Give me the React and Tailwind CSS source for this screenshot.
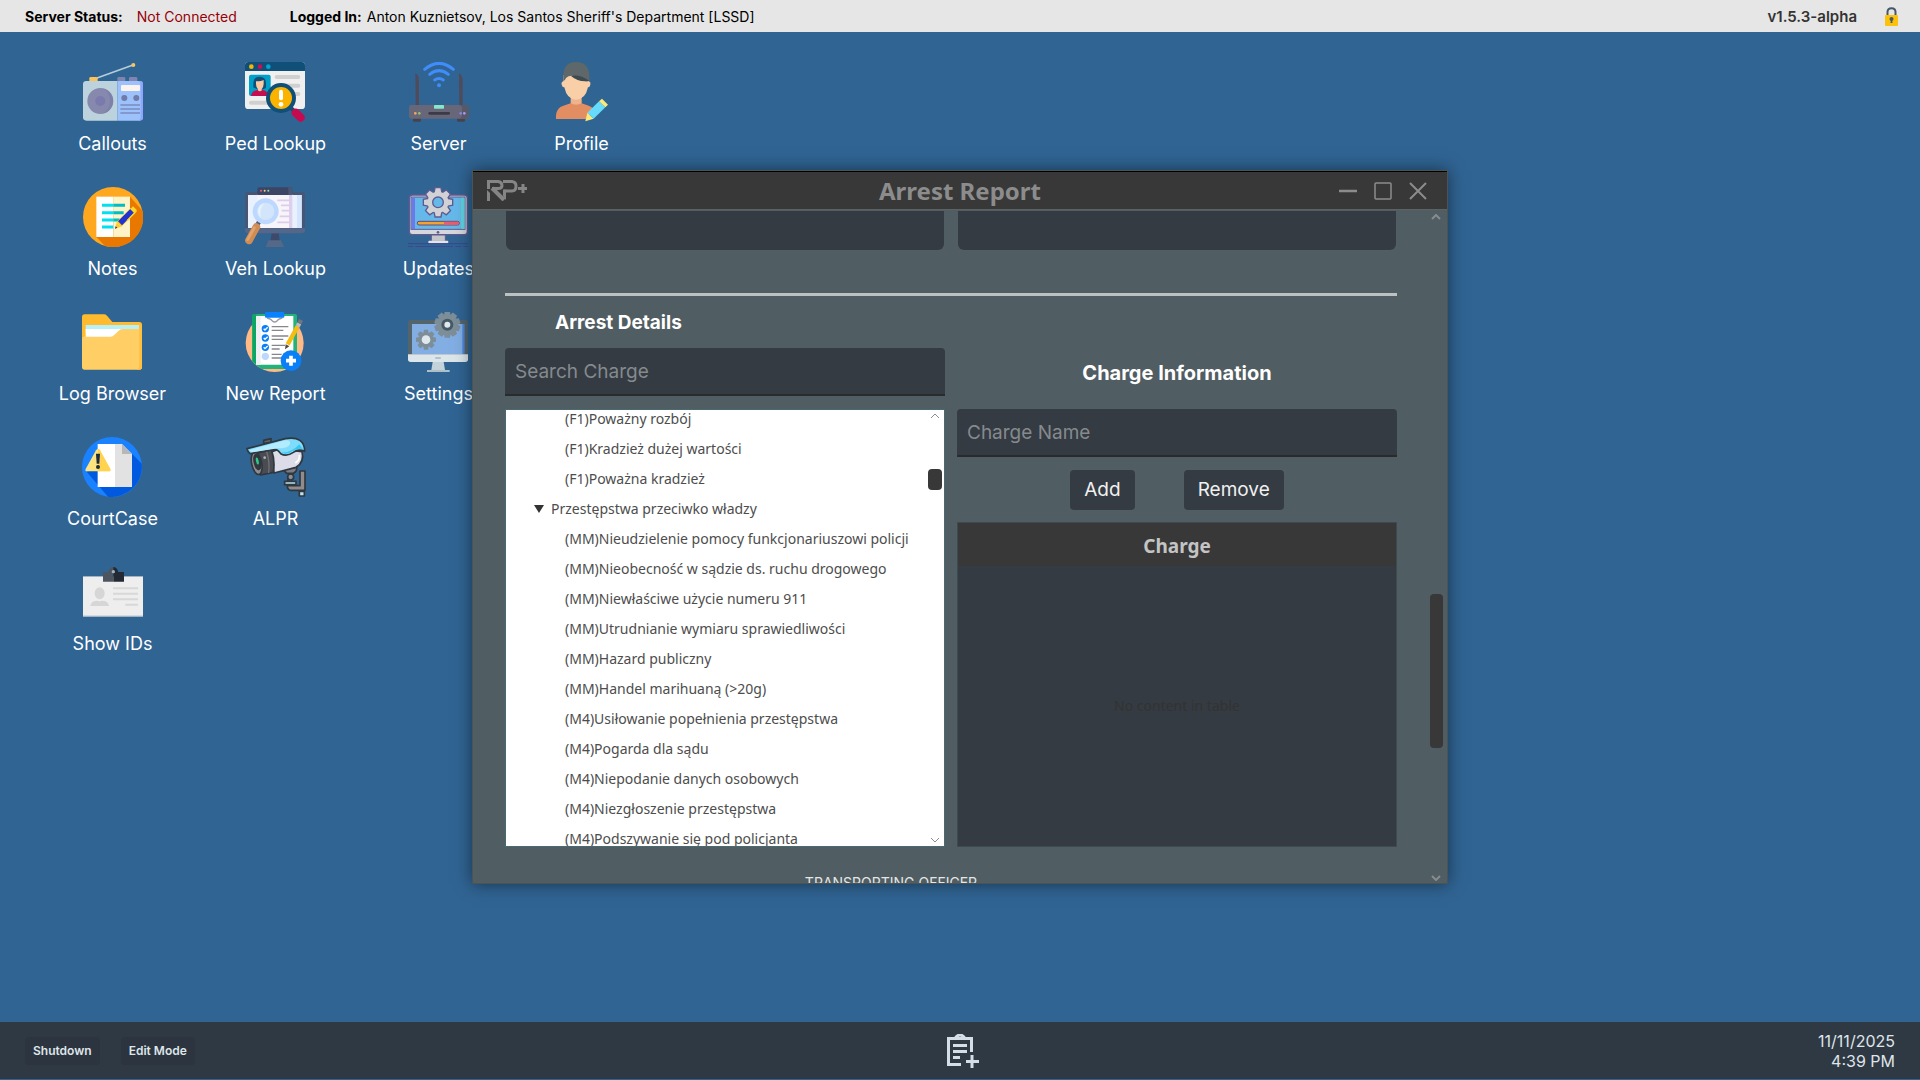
import React, { useState } from "react";

const Gear = ({ cx, cy, r, hole, teeth = 8, fill, stroke = "none", center }) => {
  const angles = Array.from({ length: teeth }, (_, i) => (i * 360) / teeth);
  return (
    <g>
      {angles.map((a) => (
        <path
          key={a}
          d={`M${cx - r * 0.28} ${cy - r * 0.6} L${cx - r * 0.2} ${cy - r} H${cx + r * 0.2} L${cx + r * 0.28} ${cy - r * 0.6}`}
          transform={`rotate(${a} ${cx} ${cy})`}
          fill={fill}
          stroke={stroke}
          strokeWidth="4"
        />
      ))}
      <circle cx={cx} cy={cy} r={r * 0.72} fill={fill} />
      <circle cx={cx} cy={cy} r={hole} fill={center} stroke={stroke} strokeWidth="4" />
    </g>
  );
};

const RadioIcon = () => (
  <svg viewBox="0 0 180 180" className="h-15 w-15">
    <path d="M42 48 L150 9" stroke="#b4cdd9" strokeWidth="5" />
    <circle cx="151" cy="9" r="6" fill="#fdc45e" />
    <path d="M19 58 V49 q0 -4 4 -4 h17 q4 0 4 4 v9z" fill="#fcc35a" />
    <path d="M103 58 v-9 q0 -4 4 -4 h16 q4 0 4 4 v9z M138 58 v-9 q0 -4 4 -4 h17 q4 0 4 4 v9z" fill="#8084af" />
    <path d="M103 57 H10 Q0 57 0 67 V166 Q0 176 10 176 H103z" fill="#bcd2dc" />
    <path d="M103 57 H170 Q180 57 180 67 V166 Q180 176 170 176 H103z" fill="#9dc2fb" />
    <path d="M166 57 H170 Q180 57 180 67 V166 Q180 176 170 176 H164 Q173 174 173 164 V68 Q173 59 166 57z" fill="#8ea5fb" />
    <circle cx="52" cy="117" r="39" fill="#8689ad" />
    <path d="M60 79 A39 39 0 0 1 60 155 A45 45 0 0 0 60 79z" fill="#7d80a8" />
    <circle cx="52" cy="117" r="15" fill="#7b7aad" />
    <rect x="114" y="69" width="57" height="18" rx="3" fill="#faf3f0" />
    <circle cx="124" cy="108" r="9" fill="#6f7ba8" />
    <circle cx="160" cy="108" r="9" fill="#6f7ba8" />
    <path d="M112 129 H171 M112 141 H171 M112 153 H171" stroke="#7a8cbf" strokeWidth="5" />
  </svg>
);

const PedIcon = () => (
  <svg viewBox="0 0 180 180" className="h-15 w-15">
    <rect width="180" height="141" rx="10" fill="#f0f0f0" />
    <path d="M0 27 V10 Q0 0 10 0 H170 Q180 0 180 10 V27z" fill="#0f4f78" />
    <circle cx="19" cy="14" r="7" fill="#f8b500" />
    <circle cx="45" cy="14" r="7" fill="#c90f55" />
    <circle cx="70" cy="14" r="7" fill="#00a4cf" />
    <rect x="12" y="38" width="65" height="64" rx="6" fill="#00a0c8" />
    <path d="M25 76 V62 Q26 44 44 44 Q62 44 63 62 V78 Q44 88 25 76z" fill="#0f4f78" />
    <path d="M33 58 Q50 58 56 54 V66 Q55 78 50 82 V90 H39 V82 Q33 76 33 66z" fill="#fbc9a2" />
    <path d="M18 102 Q20 86 38 84 Q44 92 52 84 Q68 86 71 102z" fill="#c50d50" />
    <path d="M95 45 H160 M95 71 H160 M95 96 H160 M18 122 H70" stroke="#d0d0d0" strokeWidth="12" strokeLinecap="round" />
    <path d="M138 138 L152 152" stroke="#0f4f78" strokeWidth="12" />
    <path d="M152 152 L167 167" stroke="#c50a50" strokeWidth="24" strokeLinecap="round" />
    <circle cx="108" cy="108" r="45" fill="#0f4f78" />
    <circle cx="108" cy="108" r="33" fill="#fab400" />
    <rect x="102" y="83" width="12" height="32" rx="6" fill="#fff" />
    <circle cx="108" cy="127" r="7" fill="#fff" />
  </svg>
);

const NotesIcon = () => (
  <svg viewBox="0 0 180 180" className="h-15 w-15">
    <circle cx="90" cy="90" r="90" fill="#ffa71f" />
    <path d="M141 29 L179 72 A90 90 0 0 1 66 177 L40 150z" fill="#e87800" />
    <path d="M40 29 H91 V150 H40z" fill="#fff" />
    <path d="M91 29 H141 V150 H91z" fill="#fff3c8" />
    <path d="M57 55 H91 M57 77 H91 M57 99 H91 M57 120 H91" stroke="#00e0ee" strokeWidth="9" />
    <path d="M91 55 H126 M91 77 H122 M91 99 H110" stroke="#00bcc4" strokeWidth="9" />
    <path d="M96 125 L101 107 L113 119z" fill="#ffc928" />
    <path d="M96 125 L98 118 L103 122z" fill="#1f2a9c" />
    <path d="M107 113 L150 70" stroke="#ffcf1f" strokeWidth="20" />
    <path d="M111 109 L148 72" stroke="#2332d2" strokeWidth="17" />
    <path d="M142 66 L150 58 L162 70 L154 78z" fill="#ffd829" />
    <path d="M160 72 L132 101" stroke="#ffd829" strokeWidth="4" />
  </svg>
);

const VehIcon = () => (
  <svg viewBox="0 0 180 180" className="h-15 w-15">
    <path d="M80 138 H101 L104 162 H76z" fill="#3e4a6b" />
    <path d="M70 160 H108 L117 180 H62z" fill="#556887" />
    <rect y="15" width="180" height="124" rx="10" fill="#475675" />
    <path d="M0 124 H180 V130 Q180 139 170 139 H10 Q0 139 0 130z" fill="#54678a" />
    <rect x="9" y="24" width="161" height="99" fill="#e9f1ff" />
    <path d="M156 24 H170 V123 H156z" fill="#d3e4ff" />
    <path d="M37 22 H142 V123 H37z" fill="#f7f4fa" />
    <path d="M132 22 H142 V123 H132z" fill="#ddd0ee" />
    <path d="M37 24 V6 Q37 1 43 1 H136 Q142 1 142 6 V24z" fill="#3c4664" />
    <path d="M130 1 H136 Q142 1 142 6 V24 H130z" fill="#4b5777" />
    <circle cx="48" cy="11" r="3" fill="#e0637a" />
    <circle cx="59" cy="11" r="3" fill="#f1d08a" />
    <circle cx="70" cy="11" r="3" fill="#9fd9a3" />
    <path d="M97 40 H134 M108 55 H134 M110 71 H134 M104 88 H134 M97 106 H134" stroke="#dccdea" strokeWidth="5" />
    <path d="M34 118 L43 103" stroke="#4a5d78" strokeWidth="13" />
    <path d="M34 120 L12 160" stroke="#cf8d55" strokeWidth="23" strokeLinecap="round" />
    <path d="M28 122 L8 158" stroke="#e0a56e" strokeWidth="8" strokeLinecap="round" />
    <circle cx="62" cy="73" r="39" fill="#bcd8ff" />
    <circle cx="62" cy="73" r="26" fill="#d2e5fb" />
    <path d="M48 92 A26 26 0 0 1 58 48 A50 50 0 0 0 48 92z" fill="#e6f1fe" />
  </svg>
);

const RouterIcon = () => (
  <svg viewBox="0 0 180 180" className="h-15 w-15">
    <g fill="none" stroke="#3f8cfa" strokeWidth="9" strokeLinecap="round">
      <path d="M47 22 Q90 -14 133 22" />
      <path d="M62 37 Q90 15 118 37" />
      <path d="M77 54 Q90 45 103 54" />
    </g>
    <circle cx="90" cy="70" r="6" fill="#3f8cfa" />
    <path d="M19 34 Q30 38 30 58 V130 H20z M150 34 Q161 38 161 58 V130 H151z" fill="#4e4c5c" />
    <path d="M12 168 H36 V176 Q36 179 32 179 H16 Q12 179 12 176z M144 168 H168 V176 Q168 179 164 179 H148 Q144 179 144 176z" fill="#45434f" />
    <rect y="129" width="180" height="41" rx="7" fill="#676779" />
    <path d="M152 129 H173 Q180 129 180 136 V163 Q180 170 173 170 H152 Q159 168 159 160 V138 Q159 131 152 129z" fill="#595868" />
    <rect x="75" y="129" width="30" height="11" rx="2" fill="#86e8c8" />
    <rect x="58" y="150" width="65" height="8" rx="4" fill="#3c3a48" />
    <circle cx="19" cy="154" r="4" fill="#f0a860" />
    <circle cx="31" cy="154" r="4" fill="#8dc36c" />
    <circle cx="155" cy="154" r="4" fill="#8a80e0" />
    <circle cx="166" cy="154" r="4" fill="#a49af0" />
  </svg>
);

const ProfileIcon = () => (
  <svg viewBox="0 0 156 180" className="h-15 w-13">
    <path d="M44 104 H77 V130 H44z" fill="#efb38b" />
    <path d="M0 171 V160 Q2 137 22 131 L44 124 Q60 132 77 124 L98 131 Q108 134 114 142 L90 171z" fill="#e38d63" />
    <path d="M22 40 H99 V58 Q105 60 103 68 Q101 76 96 76 Q88 113 60 113 Q33 113 25 76 Q19 76 17 68 Q15 60 22 58z" fill="#f9cfa8" />
    <path d="M22 57 V38 Q24 0 60 0 Q97 0 100 38 V57 Q70 60 52 42 Q38 40 30 48 Q27 56 22 57z" fill="#5e6769" />
    <path d="M45 42 Q70 36 100 57 Q68 62 45 42z" fill="#3d4a50" />
    <path d="M88 178 L94 152 L113 170z" fill="#fbe97a" />
    <path d="M94 152 L129 118 L148 136 L113 170z" fill="#66dbfb" />
    <path d="M129 118 L138 110 L156 128 L148 136z" fill="#fbe97a" />
  </svg>
);

const UpdatesIcon = () => (
  <svg viewBox="0 0 180 180" className="h-15 w-15">
    <rect x="4" y="24" width="174" height="119" rx="9" fill="#d6d7dc" stroke="#5f5a90" strokeWidth="4" />
    <rect x="9" y="30" width="162" height="97" fill="#65b9ea" stroke="#5f5a90" strokeWidth="3" />
    <path d="M11 32 H21 V126 H11z" fill="#6c7ae8" />
    <path d="M160 32 H170 V126 H160z" fill="#5cd6e0" />
    <Gear cx={90} cy={46} r={44} hole={16} fill="#d0d2d6" stroke="#5f5a90" center="#65b9ea" />
    <rect x="28" y="103" width="126" height="11" rx="5" fill="#f7a12e" stroke="#5b4a80" strokeWidth="3" />
    <path d="M108 104 H149 Q153 104 153 108 Q153 113 149 113 H108z" fill="#ee5a6e" />
    <circle cx="90" cy="136" r="4" fill="#5f5a90" />
    <path d="M70 144 H112 V163 H70z" fill="#c4c6cb" stroke="#5f5a90" strokeWidth="3" />
    <rect x="61" y="161" width="60" height="8" rx="3" fill="#e4e5e8" />
    <path d="M0 170 H180 M0 179 H16 M22 179 H135 M142 179 H160 M166 179 H180" stroke="#3f4490" strokeWidth="3" />
  </svg>
);

const SettingsIcon = () => (
  <svg viewBox="0 0 180 180" className="h-15 w-15">
    <path d="M0 128 V32 Q0 24 8 24 H172 Q180 24 180 32 V128z" fill="#54646c" />
    <path d="M12 36 H168 V127 H12z" fill="#82aee3" />
    <path d="M163 36 H170 V127 H163z" fill="#4b86d8" />
    <path d="M0 127 H180 V142 Q180 150 172 150 H8 Q0 150 0 142z" fill="#dbe5ea" />
    <rect x="81" y="135" width="18" height="6" rx="3" fill="#b3c1c9" />
    <path d="M74 150 H107 L111 174 H70z" fill="#c4d2d9" />
    <rect x="57" y="174" width="68" height="6" fill="#aebfc8" />
    <Gear cx={118} cy={38} r={39} hole={18} teeth={10} fill="#7d8e99" center="#465a66" />
    <circle cx="118" cy="38" r="9" fill="#dfe8ec" />
    <Gear cx={54} cy={83} r={30} hole={13} teeth={8} fill="#7d8e99" center="#dfe8ec" />
  </svg>
);

const FolderIcon = () => (
  <svg viewBox="0 0 180 180" className="h-15 w-15">
    <path d="M0 80 V15 Q0 7 8 7 H66 Q71 7 75 11 L91 30 H172 Q180 30 180 38 V90z" fill="#ffbb2d" />
    <path d="M11 39 H171 V60 H11z" fill="#b6f0f8" />
    <path d="M11 51 H120 V80 H11z" fill="#fff" />
    <path d="M120 51 H172 V80 H120z" fill="#ffcf66" />
    <path d="M0 80 Q0 74 6 74 H86 Q92 74 96 70 L109 57 Q114 51 122 51 H172 L180 45 V165 Q180 173 172 173 H8 Q0 173 0 165z" fill="#ffcf66" />
    <path d="M172 38 H180 V165 Q180 173 172 173 H164 Q172 170 172 163z" fill="#ffbe3c" />
  </svg>
);

const ReportIcon = () => (
  <svg viewBox="0 0 180 180" className="h-15 w-15">
    <circle cx="89" cy="93" r="87" fill="#ffba85" />
    <path d="M22 12 Q22 6 28 6 H150 Q156 6 156 12 V171 H50 Q34 162 22 147z" fill="#22b37a" />
    <path d="M22 12 Q22 6 28 6 H34 V158 Q26 152 22 147z" fill="#0ba564" />
    <path d="M33 12 H145 V158 H33z" fill="#fff" />
    <path d="M33 12 H47 V158 H33z" fill="#eef0f4" />
    <path d="M66 18 Q78 20 82 27 Q89 33 96 27 Q100 20 112 18" fill="none" stroke="#9a9ca4" strokeWidth="4" />
    <rect x="60" y="0" width="58" height="17" rx="3" fill="#0a82ff" />
    {[50, 78, 106].map((y) => (
      <g key={y}>
        <circle cx="61" cy={y} r="11" fill="#0a7ff5" />
        <path d={`M56 ${y} l4 4 l8 -8`} fill="none" stroke="#fff" strokeWidth="4" />
      </g>
    ))}
    <circle cx="61" cy="133" r="11" fill="#bcd9fb" />
    <path d="M80 44 H130 M80 55 H115 M80 72 H130 M80 82 H115 M80 100 H120 M80 111 H104 M80 127 H110 M80 138 H108" stroke="#85878d" strokeWidth="4" />
    <path d="M120 112 L122 97 L133 103z" fill="#54463a" />
    <path d="M128 97 L158 43" stroke="#f5bd12" strokeWidth="13" />
    <path d="M158 43 L163 34" stroke="#b9bdc4" strokeWidth="13" />
    <path d="M163 34 L168 24" stroke="#74767c" strokeWidth="13" />
    <circle cx="138" cy="146" r="31" fill="#0a80f8" />
    <path d="M138 131 V161 M123 146 H153" stroke="#fff" strokeWidth="11" />
  </svg>
);

const CourtIcon = () => (
  <svg viewBox="0 0 180 180" className="h-15 w-15">
    <circle cx="90" cy="90" r="90" fill="#1a82ff" />
    <path d="M150 50 L179 80 A90 90 0 0 1 78 179 L14 104 L60 90z" fill="#0059df" />
    <path d="M47 21 H99 V150 H47z" fill="#fff" />
    <path d="M99 21 H120 L150 51 V150 H99z" fill="#e2e2e2" />
    <path d="M120 21 L150 51 H120z" fill="#b7b7b7" />
    <path d="M42 40 Q48 31 54 40 L85 96 Q87 103 80 103 H15 Q8 103 11 96z" fill="#ffe37e" />
    <path d="M48 36 Q51 35 54 40 L85 96 Q87 103 80 103 H48z" fill="#ffd250" />
    <path d="M42 50 H54 L52 80 H44z" fill="#1d2c3d" />
    <circle cx="48" cy="90" r="6" fill="#1d2c3d" />
  </svg>
);

const CameraIcon = () => (
  <svg viewBox="0 0 180 180" className="h-15 w-15">
    <g stroke="#2f373f" strokeWidth="5" strokeLinejoin="round">
      <path d="M53 20 V10 L75 5 V16z" fill="#5f6168" />
      <path d="M126 128 V146 H162 V102 H177 V160 H134 Q124 158 124 146z" fill="#918b8e" />
      <path d="M160 163 H175 V177 H160z" fill="#bfe3ee" />
      <path d="M116 133 H150 V143 H116z" fill="#b9dfec" />
      <circle cx="134" cy="120" r="9" fill="#8b8f97" />
      <path d="M112 98 L152 90 Q154 104 142 109 H122z" fill="#7f7c81" />
      <path d="M74 46 L100 36 L168 44 Q176 76 150 91 L84 108z" fill="#dcdde8" />
      <path d="M26 50 L76 38 Q88 70 82 106 L44 114z" fill="#4a4c52" />
      <ellipse cx="32" cy="79" rx="15" ry="34" transform="rotate(-12 32 79)" fill="#8f8b8f" />
      <ellipse cx="34" cy="75" rx="9" ry="23" transform="rotate(-12 34 75)" fill="#33383f" />
      <path d="M3 35 L118 5 Q176 -4 176 43 Q158 34 142 46 Q122 60 104 50 Q94 34 80 38 L12 50 Q6 46 3 35z" fill="#7fdcfb" />
    </g>
    <path d="M10 39 L112 11 Q134 6 132 20 Q128 34 96 34 L16 46z" fill="#b4ecff" />
    <path d="M104 46 Q134 50 160 22 L170 36 Q154 34 140 42 Q120 56 104 46z" fill="#35c8f4" />
    <ellipse cx="34" cy="72" rx="4" ry="11" transform="rotate(-12 34 72)" fill="#2fc98c" />
    <circle cx="56" cy="62" r="4" fill="#aeb2b8" />
    <path d="M62 44 Q72 74 68 108" fill="none" stroke="#6f7177" strokeWidth="4" />
    <path d="M160 54 Q162 70 148 78" fill="none" stroke="#fff" strokeWidth="5" />
  </svg>
);

const IdIcon = () => (
  <svg viewBox="0 0 180 180" className="h-15 w-15">
    <rect y="42" width="180" height="123" fill="#9fb3c5" />
    <rect y="45" width="180" height="116" fill="#eeeeee" />
    <path d="M60 30 H76 Q80 15 91 15 V59 H60z" fill="#4d5660" />
    <path d="M91 15 Q102 15 106 30 H123 V59 H91z" fill="#232a33" />
    <circle cx="91" cy="29" r="5" fill="#9fb3c5" />
    <ellipse cx="50" cy="94" rx="15" ry="18" fill="#d6d6d6" />
    <path d="M22 132 Q24 116 44 116 Q50 120 56 116 Q76 116 78 132z" fill="#d6d6d6" />
    <path d="M90 79 H165 M90 95 H165 M90 112 H165 M127 128 H165" stroke="#d8d8d8" strokeWidth="6" />
  </svg>
);

const RpLogo = () => (
  <svg viewBox="0 0 40 21" className="h-[21px] w-10" fill="none" stroke="#858585">
    <path d="M1.5 9 V1.5 H11 Q15 2 15 5.5 Q15 8.5 11 8.5 H5" strokeWidth="3" />
    <path d="M0 10 L3 13 V21 H0z" fill="#858585" stroke="none" />
    <path d="M5 8 L17 20" strokeWidth="4" />
    <path d="M16 1.5 H25 Q29 2 29 6 Q29 11 25 11 H17.5" strokeWidth="3" />
    <path d="M16 9.5 H19 V20 L16 16z" fill="#858585" stroke="none" />
    <path d="M36 4 V13 M31 8.5 H40" strokeWidth="3" />
  </svg>
);

const LockIcon = () => (
  <svg viewBox="0 0 13 19" className="h-[19px] w-[13px]">
    <path d="M2.5 9 V5 Q2.5 1.2 6.5 1.2 Q10.5 1.2 10.5 5 V9" fill="none" stroke="#44586a" strokeWidth="2" />
    <rect y="8" width="13" height="11" rx="1" fill="#fcc109" />
    <circle cx="6.5" cy="12" r="2" fill="#44586a" />
    <path d="M6 12 H7 L7.5 16 H5.5z" fill="#44586a" />
  </svg>
);

const NoteAddIcon = () => (
  <svg viewBox="-6 0 38 34" className="h-[34px] w-[38px]" fill="none" stroke="#d3dee8" strokeWidth="3">
    <path d="M14 30.5 H1.5 V4.5 H24.5 V18" />
    <path d="M8 4.5 Q10 1 13 1 Q16 1 18 4.5" />
    <path d="M6 11.5 H20 M6 17.5 H20 M6 23.5 H13" />
    <path d="M25 21 V34 M19 27.5 H32" />
  </svg>
);

const ICON_COLUMNS = [
  [
    { label: "Callouts", Icon: RadioIcon },
    { label: "Notes", Icon: NotesIcon },
    { label: "Log Browser", Icon: FolderIcon },
    { label: "CourtCase", Icon: CourtIcon },
    { label: "Show IDs", Icon: IdIcon },
  ],
  [
    { label: "Ped Lookup", Icon: PedIcon },
    { label: "Veh Lookup", Icon: VehIcon },
    { label: "New Report", Icon: ReportIcon },
    { label: "ALPR", Icon: CameraIcon },
  ],
  [
    { label: "Server", Icon: RouterIcon },
    { label: "Updates", Icon: UpdatesIcon },
    { label: "Settings", Icon: SettingsIcon },
  ],
  [{ label: "Profile", Icon: ProfileIcon }],
];

const ROBBERY = ["(F1)Poważny rozbój", "(F1)Kradzież dużej wartości", "(F1)Poważna kradzież"];

const AUTHORITY = [
  "(MM)Nieudzielenie pomocy funkcjonariuszowi policji",
  "(MM)Nieobecność w sądzie ds. ruchu drogowego",
  "(MM)Niewłaściwe użycie numeru 911",
  "(MM)Utrudnianie wymiaru sprawiedliwości",
  "(MM)Hazard publiczny",
  "(MM)Handel marihuaną (>20g)",
  "(M4)Usiłowanie popełnienia przestępstwa",
  "(M4)Pogarda dla sądu",
  "(M4)Niepodanie danych osobowych",
  "(M4)Niezgłoszenie przestępstwa",
  "(M4)Podszywanie się pod policjanta",
];

const Chevron = ({ up, className }) => (
  <svg viewBox="0 0 10 6" className={className} fill="none" stroke="currentColor">
    <path d={up ? "M1 5 L5 1 L9 5" : "M1 1 L5 5 L9 1"} />
  </svg>
);

const ChargeItem = ({ text, onSelect }) => (
  <li className="flex h-[30px] items-center pl-[59px]">
    <button onClick={() => onSelect(text)} className="whitespace-nowrap">
      {text}
    </button>
  </li>
);

const TopBar = () => (
  <header className="flex h-8 shrink-0 items-center bg-[#e6e6e6] pt-px pr-[22px] pl-[25px] text-sm text-black">
    <span className="font-bold">Server Status:</span>
    <span className="ml-3.5 text-[#960008]">Not Connected</span>
    <span className="ml-[53px] font-bold">Logged In:</span>
    <span className="ml-[5px]">Anton Kuznietsov, Los Santos Sheriff's Department [LSSD]</span>
    <span className="mr-7 ml-auto text-[15px] font-semibold text-[#333]">v1.5.3-alpha</span>
    <LockIcon />
  </header>
);

const ArrestWindow = () => {
  const [search, setSearch] = useState("");
  const [charge, setCharge] = useState("");
  const [open, setOpen] = useState(true);

  return (
    <section className="flex h-[714px] w-[976px] flex-col border border-[#4a5356] bg-[#505d62] shadow-[0_0_16px_rgba(0,0,0,0.5)]">
      <div className="grid h-[39px] shrink-0 grid-cols-3 items-center border-t border-b border-t-black border-b-[#5d6263] bg-[#383838] px-3.5 text-[#8c8c8c]">
        <RpLogo />
        <h1 className="text-center font-['Noto_Sans',sans-serif] text-2xl leading-8 font-bold">Arrest Report</h1>
        <div className="flex items-center justify-end gap-[17px] pr-1.5">
          <button aria-label="Minimize">
            <svg viewBox="0 0 18 18" className="h-[18px] w-[18px]" stroke="currentColor">
              <path d="M0 9 H18" strokeWidth="2.5" />
            </svg>
          </button>
          <button aria-label="Maximize">
            <svg viewBox="0 0 18 18" className="h-[18px] w-[18px]" fill="none" stroke="currentColor">
              <rect x="1" y="1" width="16" height="16" rx="1" strokeWidth="1.5" />
            </svg>
          </button>
          <button aria-label="Close">
            <svg viewBox="0 0 18 18" className="h-[18px] w-[18px]" stroke="currentColor">
              <path d="M1 1 L17 17 M17 1 L1 17" strokeWidth="2" />
            </svg>
          </button>
        </div>
      </div>

      <div className="flex min-h-0 flex-1">
        <div className="flex-1 overflow-hidden pt-px pl-8">
          <div className="grid grid-cols-2 gap-3.5 px-px">
            <input aria-label="County" className="h-[39px] rounded-b-md bg-[#343b42] px-2.5 text-white" />
            <input aria-label="Area" className="h-[39px] rounded-b-md bg-[#343b42] px-2.5 text-white" />
          </div>
          <hr className="mt-[43px] h-[3px] border-0 bg-[#bdc1c3]" />

          <div className="grid grid-cols-2 gap-3">
            <div>
              <h2 className="pt-[15px] pl-[50px] text-[19px] leading-6 font-bold text-white">Arrest Details</h2>
              <input
                aria-label="Search Charge"
                placeholder="Search Charge"
                value={search}
                onChange={(e) => setSearch(e.target.value)}
                className="mt-[13px] block h-12 w-full rounded-t border-b-2 border-[#2a2b2c] bg-[#343b42] px-2.5 text-[19px] text-white placeholder:text-[#858a8e]"
              />
              <div className="mt-[13px] flex h-[438px] overflow-hidden border border-[#4a6970] bg-white font-['Noto_Sans',sans-serif] text-sm text-[#4d4d4d]">
                <ul className="-mt-1.5 min-w-0 flex-1">
                  {ROBBERY.map((text) => (
                    <ChargeItem key={text} text={text} onSelect={setCharge} />
                  ))}
                  <li>
                    <button onClick={() => setOpen(!open)} aria-expanded={open} className="flex h-[30px] items-center gap-[7px] pl-7">
                      <svg viewBox="0 0 10 8" className="h-2 w-2.5 fill-[#333]">
                        <path d="M0 0 H10 L5 8z" />
                      </svg>
                      Przestępstwa przeciwko władzy
                    </button>
                    <ul>
                      {open && AUTHORITY.map((text) => <ChargeItem key={text} text={text} onSelect={setCharge} />)}
                    </ul>
                  </li>
                </ul>
                <div className="flex w-[18px] shrink-0 flex-col items-center pt-[3px] pb-[3px] text-[#8c8c8c]">
                  <Chevron up className="h-1.5 w-2.5" />
                  <div className="mt-[50px] h-[21px] w-3.5 rounded bg-[#383838]" />
                  <Chevron className="mt-auto h-1.5 w-2.5" />
                </div>
              </div>
            </div>

            <div>
              <h2 className="pt-[63px] text-center text-xl leading-7 font-bold text-white">Charge Information</h2>
              <input
                aria-label="Charge Name"
                placeholder="Charge Name"
                value={charge}
                onChange={(e) => setCharge(e.target.value)}
                className="mt-[22px] block h-12 w-full rounded-t border-b-2 border-[#2a2b2c] bg-[#343b42] px-2.5 text-[19px] text-white placeholder:text-[#858a8e]"
              />
              <div className="mt-[13px] flex justify-center gap-[49px] text-[19px] text-[#f0f0f0]">
                <button className="h-10 rounded bg-[#343b42] px-3.5">Add</button>
                <button className="h-10 rounded bg-[#343b42] px-3.5">Remove</button>
              </div>
              <table className="mt-3 h-[325px] w-full border border-[#3d4a51] bg-[#343b42]">
                <thead>
                  <tr className="h-[43px]">
                    <th className="bg-[#383838] pt-1 font-['Noto_Sans',sans-serif] text-[19px] leading-6 font-bold text-[#c4c4c4]">Charge</th>
                  </tr>
                </thead>
                <tbody>
                  <tr>
                    <td className="text-center font-['Noto_Sans',sans-serif] text-sm text-[#333]">No content in table</td>
                  </tr>
                </tbody>
              </table>
            </div>
          </div>

          <h3 className="mt-[26px] pr-[120px] text-center text-sm leading-5 text-[#e4e6e7]">TRANSPORTING OFFICER</h3>
        </div>

        <div className="flex w-[50px] flex-col items-end pt-1 pr-1 pb-0.5 text-[#868c8f]">
          <Chevron up className="mr-0.5 h-1.5 w-2.5 stroke-2" />
          <div className="mt-[374px] h-[154px] w-[13px] rounded bg-[#383838]" />
          <Chevron className="mt-auto mr-0.5 h-1.5 w-2.5 stroke-2" />
        </div>
      </div>
    </section>
  );
};

const Taskbar = () => (
  <footer className="mb-px grid h-[57px] shrink-0 grid-cols-3 items-center bg-[#2f3943] px-[25px] pt-px text-[#dfe5ea]">
    <div className="flex gap-[21px] text-xs font-semibold">
      <button className="h-7 rounded bg-[#2c353f] px-2">Shutdown</button>
      <button className="h-7 rounded bg-[#2c353f] px-2">Edit Mode</button>
    </div>
    <button aria-label="New note" className="mx-auto">
      <NoteAddIcon />
    </button>
    <div className="text-right text-base leading-5">
      <p>11/11/2025</p>
      <p>4:39 PM</p>
    </div>
  </footer>
);

const App = () => {
  return (
    <div className="flex h-screen flex-col overflow-hidden bg-[#306493] font-['Inter',sans-serif]">
      <TopBar />
      <main className="relative min-h-0 flex-1">
        <div className="flex pt-[30px] pl-[31px]">
          {ICON_COLUMNS.map((column, i) => (
            <div key={i} className="flex w-[163px] flex-col items-center gap-[31px] last:w-[123px]">
              {column.map(({ label, Icon }) => (
                <button key={label} className="flex flex-col items-center gap-2.5 text-lg leading-6 text-white">
                  <Icon />
                  {label}
                </button>
              ))}
            </div>
          ))}
        </div>
        <div className="absolute inset-0 flex items-center justify-center">
          <ArrestWindow />
        </div>
      </main>
      <Taskbar />
    </div>
  );
};

export default App;
